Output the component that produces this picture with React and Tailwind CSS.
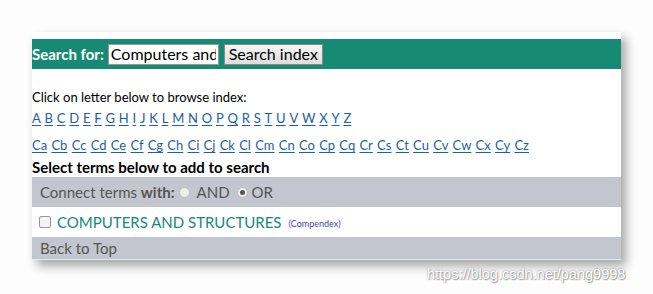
import React from "react";

const letters = "ABCDEFGHIJKLMNOPQRSTUVWXYZ".split("");
const subs = "abcdefghijklmnopqrstuvwxyz".split("").map((l) => "C" + l);

export default function App() {
  return (
    <div className="h-[294px] w-[653px] overflow-hidden bg-[#fdfdfd] pl-[32px] pt-[32px] font-['Lato',sans-serif]">
      <div className="w-[589px] bg-white pt-[7px] shadow-[5px_6px_10px_rgba(0,0,0,0.35)]">
        {/* Search bar */}
        <div className="flex h-[30px] items-center bg-[#168a73]">
          <span className="text-[15px] font-bold text-white">Search for:</span>
          <input
            className="ml-[4px] h-[21px] w-[111px] border border-[#999] bg-white px-[2px] text-[16px] text-black outline-none"
            defaultValue="Computers and Structures"
            readOnly
          />
          <button className="ml-[5px] h-[21px] w-[99px] border border-[#8a8a8a] bg-gradient-to-b from-[#f4f4f4] to-[#dedede] text-[16px] leading-none text-black">
            Search index
          </button>
        </div>

        <div className="pt-[20px] text-[13px] leading-[16px] text-black">
          Click on letter below to browse index:
        </div>
        <div className="mt-[5px] flex gap-x-[3.8px] text-[13px] leading-[16px] text-[#1c5ea8]">
          {letters.map((l) => (
            <a key={l} href="#" className="underline underline-offset-2">
              {l}
            </a>
          ))}
        </div>
        <div className="mt-[11px] flex gap-x-[4.25px] text-[13px] leading-[16px] text-[#1c5ea8]">
          {subs.map((l) => (
            <a key={l} href="#" className="underline underline-offset-2">
              {l}
            </a>
          ))}
        </div>
        <div className="mt-[5px] text-[15px] font-bold leading-[19px] text-black">
          Select terms below to add to search
        </div>

        {/* Connect row */}
        <div className="flex h-[30px] items-center bg-[#c3c6cf] pl-[8px] text-[15px] text-[#555]">
          <span>
            Connect terms <span className="font-bold">with:</span>
          </span>
          <span className="ml-[4px] h-[11px] w-[11px] rounded-full border border-[#bbb] bg-[#eee]" />
          <span className="ml-[7px]">AND</span>
          <span className="ml-[7px] flex h-[11px] w-[11px] items-center justify-center rounded-full border border-[#bbb] bg-[#eee]">
            <span className="h-[5px] w-[5px] rounded-full bg-[#555]" />
          </span>
          <span className="ml-[4px]">OR</span>
        </div>

        {/* Result row */}
        <div className="flex h-[30px] items-center pl-[7px]">
          <span className="h-[12px] w-[12px] rounded-[2px] border border-[#999] bg-[#f4f4f4]" />
          <span className="ml-[6px] text-[15px] text-[#16897a]">
            COMPUTERS AND STRUCTURES
          </span>
          <span className="ml-[7px] mt-[3px] text-[9px] text-[#4a44b0]">
            (Compendex)
          </span>
        </div>

        {/* Footer row */}
        <div className="flex h-[23px] items-center border-b border-[#e8e8e8] bg-[#c3c6cf] pl-[8px] text-[15px] text-[#555]">
          Back to Top
        </div>
      </div>
      <div className="mt-[4px] pl-[395px] text-[14.5px] leading-[20px] text-white [text-shadow:0_0_2px_#888,1px_1px_1px_#aaa] font-['Liberation_Sans',sans-serif]">
        https://blog.csdn.net/pang9998
      </div>
    </div>
  );
}
